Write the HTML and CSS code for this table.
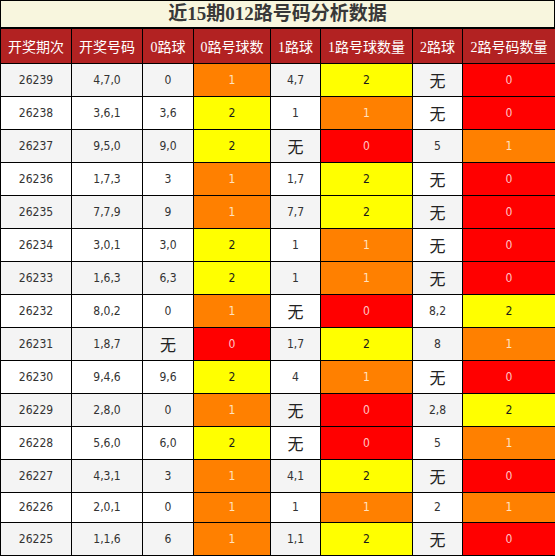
FILE: index.html
```html
<!DOCTYPE html>
<html lang="zh">
<head>
<meta charset="utf-8">
<title>近15期012路号码分析数据</title>
<link rel="stylesheet" href="styles.css">
</head>
<body>
<div class="wrap">
  <div class="title">近15期012路号码分析数据</div>
  <table class="data">
    <colgroup>
      <col class="c1"><col class="c2"><col class="c3"><col class="c4"><col class="c5"><col class="c6"><col class="c7"><col class="c8">
    </colgroup>
    <thead>
      <tr><th>开奖期次</th><th>开奖号码</th><th>0路球</th><th>0路号球数</th><th>1路球</th><th>1路号球数量</th><th>2路球</th><th>2路号码数量</th></tr>
    </thead>
    <tbody>
      <tr><td>26239</td><td>4,7,0</td><td>0</td><td class="o">1</td><td>4,7</td><td class="y">2</td><td><span class="wu">无</span></td><td class="r">0</td></tr>
      <tr><td>26238</td><td>3,6,1</td><td>3,6</td><td class="y">2</td><td>1</td><td class="o">1</td><td><span class="wu">无</span></td><td class="r">0</td></tr>
      <tr><td>26237</td><td>9,5,0</td><td>9,0</td><td class="y">2</td><td><span class="wu">无</span></td><td class="r">0</td><td>5</td><td class="o">1</td></tr>
      <tr><td>26236</td><td>1,7,3</td><td>3</td><td class="o">1</td><td>1,7</td><td class="y">2</td><td><span class="wu">无</span></td><td class="r">0</td></tr>
      <tr><td>26235</td><td>7,7,9</td><td>9</td><td class="o">1</td><td>7,7</td><td class="y">2</td><td><span class="wu">无</span></td><td class="r">0</td></tr>
      <tr><td>26234</td><td>3,0,1</td><td>3,0</td><td class="y">2</td><td>1</td><td class="o">1</td><td><span class="wu">无</span></td><td class="r">0</td></tr>
      <tr><td>26233</td><td>1,6,3</td><td>6,3</td><td class="y">2</td><td>1</td><td class="o">1</td><td><span class="wu">无</span></td><td class="r">0</td></tr>
      <tr><td>26232</td><td>8,0,2</td><td>0</td><td class="o">1</td><td><span class="wu">无</span></td><td class="r">0</td><td>8,2</td><td class="y">2</td></tr>
      <tr><td>26231</td><td>1,8,7</td><td><span class="wu">无</span></td><td class="r">0</td><td>1,7</td><td class="y">2</td><td>8</td><td class="o">1</td></tr>
      <tr><td>26230</td><td>9,4,6</td><td>9,6</td><td class="y">2</td><td>4</td><td class="o">1</td><td><span class="wu">无</span></td><td class="r">0</td></tr>
      <tr><td>26229</td><td>2,8,0</td><td>0</td><td class="o">1</td><td><span class="wu">无</span></td><td class="r">0</td><td>2,8</td><td class="y">2</td></tr>
      <tr><td>26228</td><td>5,6,0</td><td>6,0</td><td class="y">2</td><td><span class="wu">无</span></td><td class="r">0</td><td>5</td><td class="o">1</td></tr>
      <tr><td>26227</td><td>4,3,1</td><td>3</td><td class="o">1</td><td>4,1</td><td class="y">2</td><td><span class="wu">无</span></td><td class="r">0</td></tr>
      <tr><td>26226</td><td>2,0,1</td><td>0</td><td class="o">1</td><td>1</td><td class="o">1</td><td>2</td><td class="o">1</td></tr>
      <tr><td>26225</td><td>1,1,6</td><td>6</td><td class="o">1</td><td>1,1</td><td class="y">2</td><td><span class="wu">无</span></td><td class="r">0</td></tr>
    </tbody>
  </table>
</div>
</body>
</html>
```

FILE: styles.css
```css
html, body {
  margin: 0;
  padding: 0;
  background: #fff;
}

.wrap {
  width: 555px;
}

.title {
  height: 26px;
  line-height: 26px;
  border: 1px solid #000;
  background: #f8f6de;
  text-align: center;
  font-family: "Liberation Serif", "Noto Sans CJK SC", serif;
  font-weight: bold;
  font-size: 19px;
  color: #383838;
}

.data {
  width: 555px;
  border-collapse: collapse;
  table-layout: fixed;
}

.c1 { width: 71px; }
.c2 { width: 71px; }
.c3 { width: 51px; }
.c4 { width: 77px; }
.c5 { width: 50px; }
.c6 { width: 92px; }
.c7 { width: 50px; }
.c8 { width: 93px; }

.data th,
.data td {
  border: 1px solid #000;
  text-align: center;
  vertical-align: middle;
  padding: 0;
}

.data th {
  height: 34px;
  background: #b22222;
  color: #fff;
  font-family: "Liberation Serif", "Noto Sans CJK SC", serif;
  font-weight: normal;
  font-size: 14px;
}

.data td {
  padding: 7px 0;
  line-height: 15px;
  font-family: "DejaVu Sans Condensed", "DejaVu Sans", sans-serif;
  font-size: 12px;
  color: #333;
}

.data tbody tr:nth-child(odd) { background: #f4f4f4; }
.data tbody tr:nth-child(even) { background: #fff; }

.data td.o { background: #ff8000; color: #ffe2c0; }
.data td.y { background: #ffff00; color: #1a1a1a; }
.data td.r { background: #ff0000; color: #ffc4c4; }

.wu {
  display: inline-block;
  vertical-align: top;
  font-family: "Noto Sans CJK SC", sans-serif;
  font-size: 16px;
  line-height: 18px;
  color: #222;
}
```
